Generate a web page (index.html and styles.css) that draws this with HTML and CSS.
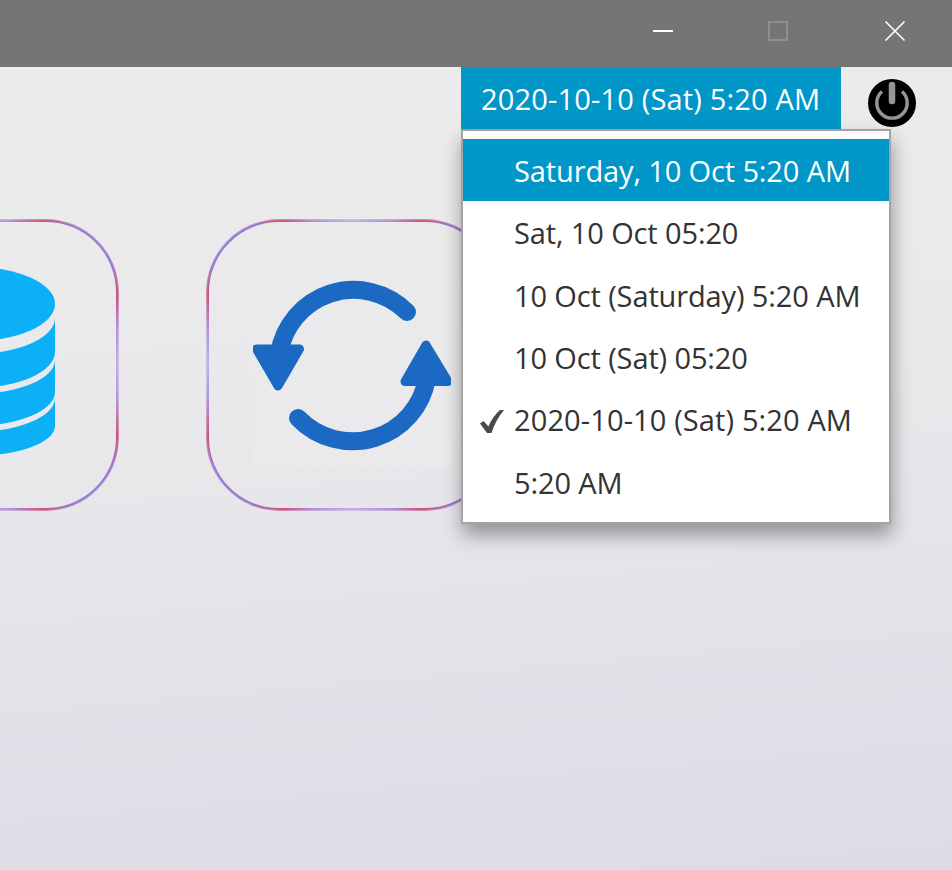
FILE: index.html
```html
<!DOCTYPE html>
<html lang="en">
<head>
<meta charset="utf-8">
<title>Clock menu</title>
<link rel="stylesheet" href="styles.css">
</head>
<body>
<div class="app">
  <div class="titlebar">
    <div class="win-btn"><svg width="24" height="24" viewBox="0 0 24 24"><path d="M2 12H22" stroke="#fff" stroke-width="2"/></svg></div>
    <div class="win-btn"><svg width="24" height="24" viewBox="0 0 24 24"><rect x="3" y="3" width="18" height="18" fill="none" stroke="#8f8f8f" stroke-width="2"/></svg></div>
    <div class="win-btn close"><svg width="24" height="24" viewBox="0 0 24 24"><path d="M2.5 2.5L21.5 21.5M21.5 2.5L2.5 21.5" stroke="#fff" stroke-width="1.6"/></svg></div>
  </div>
  <header class="topbar">
    <div class="clock">2020-10-10 (Sat) 5:20 AM</div>
    <div class="power">
      <svg width="50" height="50" viewBox="0 0 50 50">
        <circle cx="25" cy="25" r="24" fill="#000"/>
        <path d="M15 13.5A15.2 15.2 0 1 0 35 13.5" fill="none" stroke="#969696" stroke-width="3.4"/>
        <path d="M25 7V23" stroke="#969696" stroke-width="6.5" stroke-linecap="round"/>
      </svg>
    </div>
  </header>
  <main class="cards">
    <div class="card">
      <svg class="glyph" width="198" height="200" viewBox="0 0 198 200" fill="#0cb0f7">
        <ellipse cx="99" cy="38" rx="82" ry="37"/>
        <path d="M181 52A82 36 0 0 1 17 52V86A82 36 0 0 0 181 86Z"/>
        <path d="M181 94A82 34 0 0 1 17 94V126A82 34 0 0 0 181 126Z"/>
        <path d="M181 132A82 34 0 0 1 17 132V160A82 30 0 0 0 181 160Z"/>
      </svg>
    </div>
    <div class="card">
      <svg class="glyph hatch" width="198" height="200" viewBox="0 0 198 200">
        <g fill="none" stroke="#1b69c2" stroke-width="18" stroke-linecap="round">
          <path d="M26 88A75.5 75.5 0 0 1 154 46"/>
          <path d="M45 152A75.5 75.5 0 0 0 174 112"/>
        </g>
        <g fill="#1b69c2" stroke="#1b69c2" stroke-width="9" stroke-linejoin="round">
          <path d="M3.5 83H46.5L25 120Z"/>
          <path d="M173 79L195 115.5H152Z"/>
        </g>
      </svg>
    </div>
  </main>
  <nav class="menu">
    <div class="item active">Saturday, 10 Oct 5:20 AM</div>
    <div class="item">Sat, 10 Oct 05:20</div>
    <div class="item">10 Oct (Saturday) 5:20 AM</div>
    <div class="item">10 Oct (Sat) 05:20</div>
    <div class="item iso">
      <svg class="check" width="26" height="26" viewBox="0 0 26 26"><path d="M1 14.5L4.5 12L9.5 17.5C12 11 16 5.5 21 1H25C19 8 15 16 12.5 24H8Z" fill="#4a4a4a"/></svg>
      2020-10-10 (Sat) 5:20 AM
    </div>
    <div class="item">5:20 AM</div>
  </nav>
</div>
</body>
</html>
```
FILE: styles.css
```css
* { box-sizing: border-box; }
html, body { margin: 0; height: 100%; }
body { overflow: hidden; font-family: "Open Sans", "Noto Sans", sans-serif; }
.app {
  position: relative;
  width: 952px;
  height: 870px;
  overflow: hidden;
  background: linear-gradient(175deg, #ececec 0%, #e9e9eb 45%, #dddbe6 100%);
}
.titlebar {
  height: 67px;
  background: #757575;
  display: flex;
  justify-content: flex-end;
  gap: 91px;
  padding: 0 45px 5px 0;
}
.win-btn {
  flex: none;
  display: flex;
  align-items: center;
}
.close { margin-left: 2px; }
.topbar {
  height: 63px;
  display: flex;
  justify-content: flex-end;
}
.clock {
  width: 380px;
  height: 63px;
  background: #0096c8;
  color: #fff;
  font-size: 29px;
  letter-spacing: 0.17px;
  line-height: 64px;
  padding-left: 20px;
  white-space: nowrap;
}
.power {
  width: 111px;
  padding: 11px 0 0 26px;
}
.power svg { display: block; filter: blur(0.4px); }
.cards {
  margin-top: 90px;
  display: flex;
  justify-content: flex-end;
  gap: 89px;
  padding-right: 455px;
}
.card {
  position: relative;
  flex: none;
  width: 290px;
  height: 290px;
  display: flex;
  align-items: center;
  justify-content: center;
  padding-top: 2px;
}
.card::before {
  content: "";
  position: absolute;
  inset: -1px;
  border-radius: 73px;
  padding: 3px;
  background: repeating-conic-gradient(#c2ade6 0deg, #ae92dc 14deg, #c8507a 26deg, #9673d2 36deg, #9673d2 54deg, #c8507a 64deg, #ae92dc 76deg, #c2ade6 90deg);
  -webkit-mask: linear-gradient(#000 0 0) content-box, linear-gradient(#000 0 0);
  -webkit-mask-composite: xor;
  mask-composite: exclude;
  filter: blur(0.8px);
}
.glyph { display: block; flex: none; }
.hatch {
  background: repeating-linear-gradient(135deg, #e9e9ec 0 3px, #ebebed 3px 6px);
}
.menu {
  position: absolute;
  left: 461px;
  top: 129px;
  width: 430px;
  height: 395px;
  background: #fff;
  border: 2px solid #a3a3a3;
  padding-top: 8px;
  box-shadow: 1px 11px 18px rgba(0, 0, 0, 0.36);
}
.item {
  position: relative;
  height: 62.35px;
  line-height: 64px;
  padding-left: 51px;
  font-size: 29px;
  letter-spacing: -0.12px;
  color: #333;
  white-space: nowrap;
}
.iso { letter-spacing: 0.12px; }
.active { background: #0096c8; color: #fff; }
.check { position: absolute; left: 16px; top: 21px; }
```
